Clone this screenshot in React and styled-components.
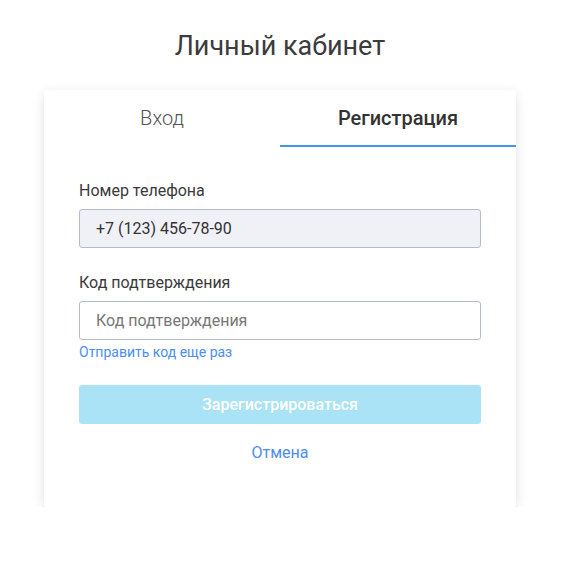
import React from "react";
import styled, { createGlobalStyle } from "styled-components";

export default function App() {
  return (
    <>
      <GlobalStyle />
      <Page>
        <Title>Личный кабинет</Title>
        <Card>
          <Tabs>
            <Tab>Вход</Tab>
            <Tab active>Регистрация</Tab>
          </Tabs>
          <Form>
            <Field>
              <Label>Номер телефона</Label>
              <Input filled defaultValue="+7 (123) 456-78-90" readOnly />
            </Field>
            <Field>
              <Label>Код подтверждения</Label>
              <Input placeholder="Код подтверждения" />
              <Resend href="#">Отправить код еще раз</Resend>
            </Field>
            <Submit disabled>Зарегистрироваться</Submit>
            <Cancel href="#">Отмена</Cancel>
          </Form>
        </Card>
      </Page>
    </>
  );
}

const GlobalStyle = createGlobalStyle`
  body {
    margin: 0;
    background: #fff;
    font-family: Roboto, "Liberation Sans", sans-serif;
  }
`;

const Page = styled.div`
  display: flex;
  flex-direction: column;
  align-items: center;
  padding: 30px 7px 0 0;
`;

const Title = styled.h1`
  margin: 0 0 27px;
  font-size: 27px;
  font-weight: 400;
  color: #3c3c3c;
  line-height: 33px;
`;

const Card = styled.div`
  width: 472px;
  background: #fff;
  border-radius: 4px;
  box-shadow: 0 3px 12px rgba(40, 50, 80, 0.13);
`;

const Tabs = styled.div`
  display: flex;
`;

const Tab = styled.div`
  flex: 1;
  height: 54px;
  display: flex;
  align-items: center;
  justify-content: center;
  padding-top: 1px;
  font-size: 20px;
  font-weight: ${(p) => (p.active ? 500 : 300)};
  color: ${(p) => (p.active ? "#333" : "#555")};
  border-bottom: 2px solid ${(p) => (p.active ? "#3d96f0" : "transparent")};
  cursor: pointer;
`;

const Form = styled.div`
  display: flex;
  flex-direction: column;
  padding: 35px 35px 45px;
`;

const Field = styled.div`
  display: flex;
  flex-direction: column;
  margin-bottom: 26px;
`;

const Label = styled.label`
  font-size: 16px;
  color: #3a3a3a;
  line-height: 18px;
  margin-bottom: 9px;
`;

const Input = styled.input`
  box-sizing: border-box;
  height: 39px;
  width: 100%;
  padding: 0 16px;
  font-family: inherit;
  font-size: 16px;
  color: #333;
  background: ${(p) => (p.filled ? "#f0f0f7" : "#fff")};
  border: 1px solid #b3bccd;
  border-radius: 3px;
  outline: none;
  &::placeholder {
    color: #777;
  }
`;

const Resend = styled.a`
  margin-top: 4px;
  font-size: 14px;
  line-height: 16px;
  color: #4b8ef0;
  text-decoration: none;
  margin-bottom: -1px;
`;

const Submit = styled.button`
  height: 39px;
  border: none;
  border-radius: 3px;
  background: #a9e3f5;
  color: #fff;
  font-family: inherit;
  font-size: 16px;
  font-weight: 500;
`;

const Cancel = styled.a`
  align-self: center;
  margin-top: 20px;
  font-size: 16px;
  line-height: 18px;
  color: #4b8ef0;
  text-decoration: none;
`;
